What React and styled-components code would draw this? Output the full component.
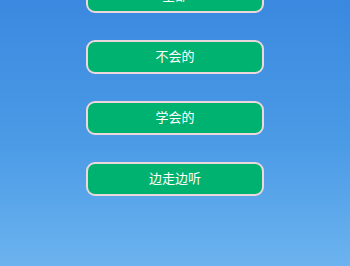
import React from "react";
import styled, { createGlobalStyle } from "styled-components";

const Global = createGlobalStyle`
  html, body { margin: 0; padding: 0; height: 100%; overflow: hidden; }
  #root { height: 100%; }
`;

const Page = styled.div`
  height: 266px;
  width: 350px;
  overflow: hidden;
  background: linear-gradient(to bottom, #3a89e0 0%, #4b9be6 55%, #6cb3ef 100%);
  font-family: "Noto Sans CJK SC", "Noto Sans", sans-serif;
`;

const Column = styled.div`
  display: flex;
  flex-direction: column;
  align-items: center;
  gap: 27px;
  margin-top: -21px;
`;

const Button = styled.button`
  width: 178px;
  height: 34px;
  box-sizing: border-box;
  border: 2px solid #ecd8dc;
  border-radius: 9px;
  background: #00b26f;
  color: #ffffff;
  font-family: inherit;
  font-size: 13px;
  padding: 0 0 3px 0;
  display: flex;
  align-items: center;
  justify-content: center;
`;

const items = ["全部", "不会的", "学会的", "边走边听"];

export default function App() {
  return (
    <Page>
      <Global />
      <Column>
        {items.map((t) => (
          <Button key={t}>{t}</Button>
        ))}
      </Column>
    </Page>
  );
}
